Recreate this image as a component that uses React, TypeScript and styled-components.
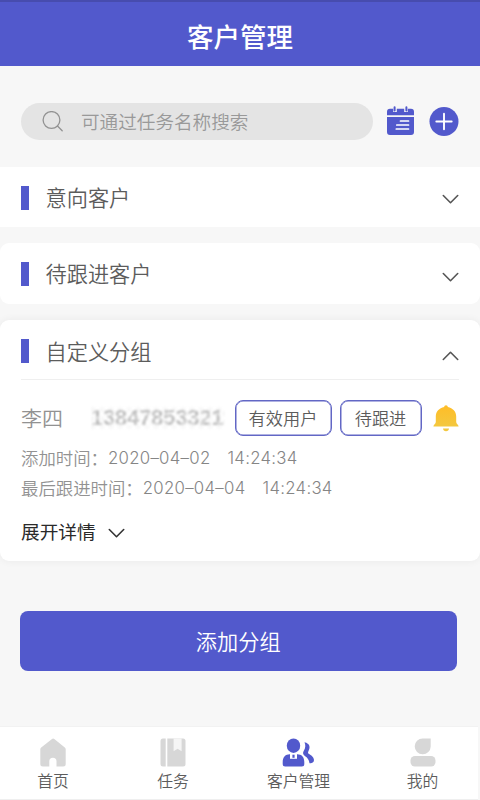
import React from "react";
import styled, { createGlobalStyle } from "styled-components";

const INDIGO = "#5259cc";

const GlobalStyle = createGlobalStyle`
  * { box-sizing: border-box; }
  body {
    margin: 0;
    background: #f7f7f7;
    font-family: "Noto Sans CJK SC", sans-serif;
    font-weight: 350;
    color: #5c5c5c;
  }
  button, input { font: inherit; }
`;

const Screen = styled.main`
  width: 480px;
  height: 800px;
  display: flex;
  flex-direction: column;
  overflow: hidden;
  background: #f7f7f7;
`;

const Header = styled.header`
  height: 66px;
  flex: none;
  display: flex;
  justify-content: center;
  padding-top: 14px;
  border-top: 2px solid #474cae;
  background: ${INDIGO};
`;

const PageTitle = styled.h1`
  margin: 0;
  color: #fff;
  font-size: 26.5px;
  line-height: 40px;
  font-weight: 500;
`;

const SearchRow = styled.div`
  height: 101px;
  flex: none;
  display: flex;
  align-items: flex-start;
  padding: 37px 20px 0 21px;
`;

const SearchBox = styled.label`
  width: 352px;
  height: 37px;
  display: flex;
  align-items: center;
  gap: 17px;
  padding-left: 21px;
  border-radius: 19px;
  background: #e4e4e4;
`;

const SearchInput = styled.input`
  width: 220px;
  height: 30px;
  margin-bottom: 2px;
  padding: 0;
  border: 0;
  outline: 0;
  background: transparent;
  font-size: 18.6px;
  &::placeholder { color: #999; opacity: 1; }
`;

const IconButton = styled.button`
  display: flex;
  margin: 3px 0 0 14px;
  padding: 0;
  border: 0;
  background: transparent;
`;

const Card = styled.section<{ $height: number; $square?: boolean; $raised?: boolean }>`
  height: ${(p) => p.$height}px;
  flex: none;
  margin-bottom: 16px;
  padding: 0 21px;
  border-radius: ${(p) => (p.$square ? 0 : 9)}px;
  background: #fff;
  box-shadow: ${(p) => (p.$raised ? "0 0 8px rgba(0, 0, 0, 0.06)" : "none")};
`;

const CardHead = styled.div<{ $top?: number; $chevronTop: number; $ruled?: boolean }>`
  height: 60px;
  display: flex;
  align-items: flex-start;
  padding-top: ${(p) => p.$top ?? 14}px;
  border-bottom: ${(p) => (p.$ruled ? "1px solid #efefef" : "0")};
  > svg { margin: ${(p) => p.$chevronTop}px -1px 0 auto; }
`;

const Marker = styled.i<{ $top?: number }>`
  width: 8px;
  height: 24px;
  margin: ${(p) => p.$top ?? 5}px 16.5px 0 0;
  background: ${INDIGO};
`;

const CardTitle = styled.h2`
  margin: 0;
  font-size: 21.2px;
  line-height: 32px;
  font-weight: 350;
`;

const ContactRow = styled.div`
  height: 36px;
  display: flex;
  align-items: center;
  margin-top: 20px;
`;

const Name = styled.span`
  width: 70px;
  margin-bottom: 2px;
  color: #929292;
  font-size: 21px;
  line-height: 32px;
`;

const Phone = styled.span`
  position: relative;
  width: 134px;
  height: 22px;
  margin-right: 9.5px;
  overflow: hidden;
  color: #b5b5b5;
  font: 700 21.5px/22px "Liberation Sans", sans-serif;
  letter-spacing: 0.1px;
  filter: blur(0.8px);
  &::after {
    content: "";
    position: absolute;
    inset: 0;
    background: repeating-conic-gradient(rgba(255, 255, 255, 0.45) 0 25%, rgba(220, 220, 220, 0.2) 0 50%) 0 0 / 9px 9px;
  }
`;

const Tag = styled.button<{ $width: number }>`
  width: ${(p) => p.$width}px;
  height: 36px;
  flex: none;
  margin-right: 8px;
  padding: 0;
  border: 1px solid #6267c5;
  box-shadow: inset 0 0 0 0.5px #6267c5;
  border-radius: 8px;
  background: #fff;
  color: #5c5c5c;
  font-size: 17.2px;
  line-height: 34px;
`;

const Bell = styled.svg`
  flex: none;
  margin-left: 3px;
`;

const Times = styled.div`
  padding-top: 7px;
`;

const TimeRow = styled.div`
  display: flex;
  height: 29.5px;
  color: #929292;
  font-size: 17.4px;
  line-height: 29px;
`;

const Digits = styled.time`
  padding-top: 1px;
  color: #858585;
  font-family: Inter, sans-serif;
  font-size: 16.8px;
  font-weight: 300;
  letter-spacing: 0.28px;
  & + & { margin-left: 17px; }
`;

const Expand = styled.button`
  display: flex;
  align-items: center;
  gap: 11px;
  margin-top: 15px;
  padding: 0;
  border: 0;
  background: transparent;
  color: #2a2a2a;
  font-size: 18.7px;
  line-height: 28px;
  font-weight: 400;
  > svg { margin-top: 4px; }
`;

const AddButton = styled.button`
  width: 437.5px;
  height: 60px;
  flex: none;
  margin: 34px 0 0 19.5px;
  padding: 0 0 2px;
  border: 0;
  border-radius: 8px;
  background: ${INDIGO};
  color: #fff;
  font-size: 21.2px;
`;

const TabBar = styled.nav`
  width: 478px;
  height: 74px;
  display: grid;
  grid-template-columns: 106px 134px 117px 121px;
  margin-top: auto;
  border-top: 1px solid #f2f2f2;
  border-bottom: 1px solid #efefef;
  background: #fff;
`;

const Tab = styled.a<{ $nudge?: number }>`
  display: flex;
  flex-direction: column;
  align-items: center;
  gap: 2px;
  padding: 11px 0 0 ${(p) => p.$nudge ?? 0}px;
  font-size: 15.8px;
  line-height: 24px;
  white-space: nowrap;
`;

const Chevron = ({ up = false, color = "#555" }: { up?: boolean; color?: string }) => (
  <svg width="19" height="12" viewBox="0 0 19 12" fill="none" stroke={color} strokeWidth="1.6" strokeLinecap="round" strokeLinejoin="round">
    <path d={up ? "M2.3 9.5 9.5 2.3 16.7 9.5" : "M2.3 2.5 9.5 9.7 16.7 2.5"} />
  </svg>
);

const SearchIcon = () => (
  <svg width="22" height="22" viewBox="0 0 22 22" fill="none" stroke="#929292" strokeWidth="1.3">
    <circle cx="9.5" cy="9" r="8.4" />
    <path d="m15.5 15 4.700 4.700" strokeLinecap="round" />
  </svg>
);

const CalendarIcon = () => (
  <svg width="28" height="30" viewBox="0 0 28 30">
    <path fill={INDIGO} d="M0 9.300V5.800a3 3 0 0 1 3-3h21a3 3 0 0 1 3 3v3.500ZM0 11h27v15a3 3 0 0 1-3 3H3a3 3 0 0 1-3-3Z" />
    <path stroke="#f7f7f7" strokeWidth="3.600" d="M8 2v4M19 2v4" />
    <path stroke={INDIGO} strokeWidth="2" strokeLinecap="round" d="M7.600 1.200v3.300M19.400 1.200v3.300" />
    <path stroke="#fff" strokeWidth="1.700" strokeLinecap="round" d="M13.500 15H21.500M9.800 19h11.700M9.300 23H21.500" />
  </svg>
);

const PlusIcon = () => (
  <svg width="30" height="30" viewBox="0 0 30 30">
    <circle cx="15" cy="15.500" r="14.500" fill={INDIGO} />
    <path d="M15 7.800v15.400M7.300 15.500h15.400" stroke="#fff" strokeWidth="1.900" strokeLinecap="round" />
  </svg>
);

const BellIcon = () => (
  <Bell width="26" height="27" viewBox="0 0 26 27">
    <defs>
      <linearGradient id="bell" x2="0" y2="1">
        <stop stopColor="#ffbd27" />
        <stop offset="1" stopColor="#f3c83f" />
      </linearGradient>
    </defs>
    <path fill="url(#bell)" d="M13 .3c1 0 1.800.7 1.800 1.700 5 1 8.400 4.500 8.400 9.500v5.500c0 1.700 2.400 2.600 2.400 4.600H.4c0-2 2.400-2.900 2.400-4.600v-5.500c0-5 3.400-8.500 8.400-9.500 0-1 .8-1.700 1.800-1.700Z" />
    <path fill="#f3c83f" d="M10 23.500h6c0 1.600-1.300 2.700-3 2.700s-3-1.100-3-2.700Z" />
  </Bell>
);

const HomeIcon = () => (
  <svg width="26" height="29" viewBox="0 0 26 29">
    <path fill="#d7d7d7" d="M12 1a2 2 0 0 1 2.300 0L24.800 9.400A2.500 2.500 0 0 1 25.700 11.300V26a2.500 2.500 0 0 1-2.500 2.500H16.500v-5.200a3.600 3.600 0 0 0-7.200 0v5.200H2.800A2.500 2.500 0 0 1 .3 26V11.300A2.500 2.500 0 0 1 1.200 9.400Z" />
  </svg>
);

const BookIcon = () => (
  <svg width="26" height="29" viewBox="0 0 26 29">
    <rect x=".5" y=".5" width="25" height="28" rx="2.500" fill="#d7d7d7" />
    <path d="M6.500 0v29" stroke="#fff" strokeWidth="1.600" />
    <path d="M13.600 .5h8v12.800l-4-2.600-4 2.600Z" fill="#f5f5f5" />
  </svg>
);

const CustomersIcon = () => (
  <svg width="33" height="29" viewBox="0 0 33 29" fill={INDIGO}>
    <path d="M22.500 4.300c5.500 1.200 6 5.200 4 8.700-1 1.800-.4 2.600 1 3.300 3.400 1.700 4.900 4.700 4.400 6.700-.4 1.600-2.400 2.300-4.400 2.300-.4-3.300-1.800-5.400-4.300-7.100-2.300-1.500-2.700-3.300-1.400-5.400 1.700-2.800 2-5.500.7-8.500Z" />
    <ellipse cx="11.500" cy="7.700" rx="6.700" ry="7.200" />
    <path d="M.7 24c0-5 3-7.700 7-7.700h7.600c4.200 0 7 2.700 7 7.700v2a2.500 2.500 0 0 1-2.500 2.500H3.200A2.500 2.500 0 0 1 .7 26Z" />
    <path d="M8 15.800h7v5H8Z" fill="#fff" />
    <path d="M10.400 16.700h2.200v3.100h-2.200Z" />
  </svg>
);

const ProfileIcon = () => (
  <svg width="26" height="29" viewBox="0 0 26 29" fill="#d7d7d7">
    <path d="M20.700 .5v8a8 7.900 0 1 1-8-8Z" />
    <rect x=".5" y="18" width="25" height="10.500" rx="4.500" />
  </svg>
);

export default function App() {
  return (
    <>
      <GlobalStyle />
      <Screen>
        <Header><PageTitle>客户管理</PageTitle></Header>
        <SearchRow>
          <SearchBox><SearchIcon /><SearchInput placeholder="可通过任务名称搜索" /></SearchBox>
          <IconButton aria-label="日历"><CalendarIcon /></IconButton>
          <IconButton aria-label="添加"><PlusIcon /></IconButton>
        </SearchRow>
        <Card $height={60} $square>
          <CardHead $chevronTop={12}><Marker /><CardTitle>意向客户</CardTitle><Chevron /></CardHead>
        </Card>
        <Card $height={61}>
          <CardHead $chevronTop={14}><Marker /><CardTitle>待跟进客户</CardTitle><Chevron /></CardHead>
        </Card>
        <Card $height={241} $raised>
          <CardHead $top={15} $chevronTop={15} $ruled><Marker $top={4} /><CardTitle>自定义分组</CardTitle><Chevron up /></CardHead>
          <ContactRow>
            <Name>李四</Name>
            <Phone>13847853321</Phone>
            <Tag $width={97}>有效用户</Tag>
            <Tag $width={82}>待跟进</Tag>
            <BellIcon />
          </ContactRow>
          <Times>
            <TimeRow>添加时间：<Digits>2020–04–02</Digits><Digits>14:24:34</Digits></TimeRow>
            <TimeRow>最后跟进时间：<Digits>2020–04–04</Digits><Digits>14:24:34</Digits></TimeRow>
          </Times>
          <Expand>展开详情<Chevron color="#333" /></Expand>
        </Card>
        <AddButton>添加分组</AddButton>
        <TabBar>
          <Tab><HomeIcon />首页</Tab>
          <Tab><BookIcon />任务</Tab>
          <Tab><CustomersIcon />客户管理</Tab>
          <Tab $nudge={10}><ProfileIcon />我的</Tab>
        </TabBar>
      </Screen>
    </>
  );
}
